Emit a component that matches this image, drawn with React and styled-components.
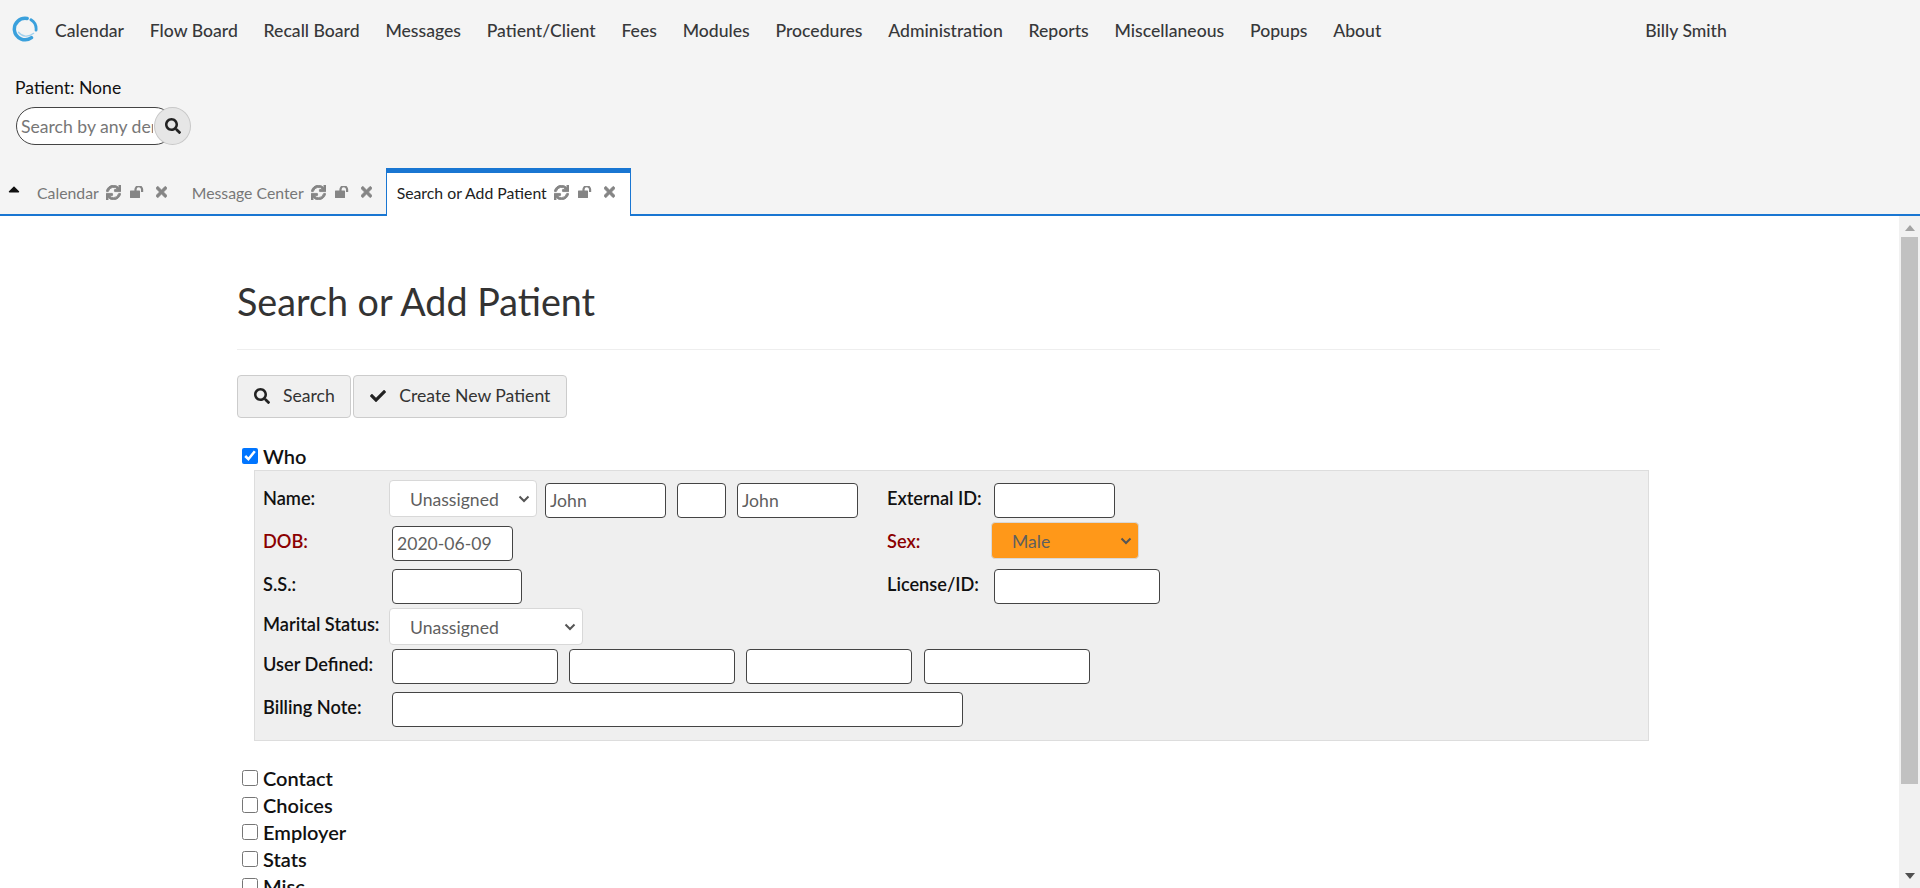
import React from 'react';
import styled, { createGlobalStyle } from 'styled-components';
import { FaSearch, FaCheck, FaSync, FaTimes, FaCaretUp } from 'react-icons/fa';

const GlobalStyle = createGlobalStyle`
  html, body {
    margin: 0;
    height: 100%;
    overflow: hidden;
  }
  body {
    font-family: Lato, "Open Sans", sans-serif;
    color: #333;
  }
  * {
    box-sizing: border-box;
  }
`;

const chevron = `url("data:image/svg+xml,%3Csvg xmlns='http://www.w3.org/2000/svg' width='12' height='8' viewBox='0 0 12 8'%3E%3Cpath d='M1.5 1.5L6 6l4.5-4.5' fill='none' stroke='%23555' stroke-width='2'/%3E%3C/svg%3E")`;

const Page = styled.div`
  height: 100vh;
  display: flex;
  flex-direction: column;
  background: #fff;
`;

const Header = styled.header`
  background: #f4f4f4;
  flex: none;
  height: 216px;
  display: flex;
  flex-direction: column;
  border-bottom: 2px solid #1976d2;
`;

const Nav = styled.nav`
  display: flex;
  align-items: center;
  height: 52px;
  padding: 9px 0 0 12px;
`;

const Logo = styled.svg`
  width: 26px;
  height: 26px;
  margin: -4px 17px 0 0;
  flex: none;
`;

const NavLinks = styled.div`
  display: flex;
  gap: 25.8px;
`;

const NavLink = styled.a`
  font-size: 17.6px;
  font-weight: 500;
  color: #37383a;
`;

const NavUser = styled(NavLink)`
  margin-left: 264px;
`;

const PatientBlock = styled.div`
  padding: 26px 0 0 15px;
`;

const PatientLabel = styled.div`
  font-size: 17.6px;
  line-height: 20px;
  color: #111;
`;

const SearchBox = styled.div`
  display: flex;
  align-items: center;
  width: 176px;
  height: 38px;
  margin: 9px 0 0 1px;
`;

const SearchInput = styled.input`
  width: 158px;
  height: 38px;
  margin-right: -20px;
  padding: 0 20px 0 4px;
  font: 17.6px Lato, sans-serif;
  border: 1px solid #444;
  border-radius: 19px;
  background: #fff;
  &::placeholder {
    color: #777;
  }
`;

const SearchButton = styled.button`
  position: relative;
  width: 37px;
  height: 38px;
  padding: 0;
  border: 1px solid #c8c8c8;
  border-radius: 50%;
  background: #e6e6e6;
  color: #222;
  font-size: 16px;
  display: flex;
  align-items: center;
  justify-content: center;
`;

const TabBar = styled.div`
  display: flex;
  align-items: flex-end;
  height: 46px;
  margin-top: 23px;
`;

const TabToggle = styled.span`
  width: 37px;
  height: 100%;
  padding: 12px 0 0 5px;
  color: #111;
  font-size: 18px;
`;

const Tab = styled.div`
  display: flex;
  align-items: center;
  height: 44px;
  padding: 0 25px 0 0;
  font-size: 15.8px;
  color: #777;
`;

const ActiveTab = styled(Tab)`
  height: 48px;
  margin: 0 0 -2px -11px;
  padding: 0 15px 5px 10px;
  color: #222;
  background: #fff;
  border: 1px solid #1976d2;
  border-top: 5px solid #1976d2;
  border-bottom: none;
`;

const TabIcons = styled.span`
  display: flex;
  align-items: center;
  gap: 9px;
  margin-left: 7px;
  color: #858585;
  font-size: 15px;
`;

const SyncIcon = styled(FaSync)`
  stroke: currentColor;
  stroke-width: 30;
`;

const CloseIcon = styled(FaTimes)`
  width: 11px;
  height: 16px;
  margin-left: 2px;
  stroke: currentColor;
  stroke-width: 20;
`;

const Body = styled.div`
  flex: 1;
  min-height: 0;
  display: flex;
`;

const Content = styled.main`
  flex: 1;
  min-width: 0;
  overflow: hidden;
`;

const Scrollbar = styled.div`
  flex: none;
  width: 21px;
  display: flex;
  flex-direction: column;
  align-items: center;
  background: #f1f1f1;
`;

const ScrollArrow = styled.span`
  flex: none;
  width: 0;
  height: 0;
  margin: ${(p) => (p.$down ? 'auto 0 9px' : '9px 0 0')};
  border-left: 5px solid transparent;
  border-right: 5px solid transparent;
  border-${(p) => (p.$down ? 'top' : 'bottom')}: 6px solid ${(p) => (p.$down ? '#505050' : '#a3a3a3')};
`;

const ScrollThumb = styled.span`
  flex: none;
  width: 17px;
  height: 547px;
  margin-top: 6px;
  background: #c1c1c1;
`;

const Container = styled.div`
  width: 1423px;
  margin-left: 237px;
`;

const Title = styled.h1`
  margin: 0;
  padding: 63px 0 24px;
  font-size: 37.7px;
  line-height: 46px;
  font-weight: 400;
  color: #333;
  border-bottom: 1px solid #eee;
`;

const Toolbar = styled.div`
  display: flex;
  gap: 2px;
  margin-top: 25px;
`;

const ToolButton = styled.button`
  display: flex;
  align-items: center;
  gap: 13px;
  height: 43px;
  padding: 0 15.5px 2px 16px;
  font: 17.6px Lato, sans-serif;
  color: #333;
  background: #f0f0f0;
  border: 1px solid #ccc;
  border-radius: 4px;
  svg {
    font-size: 16px;
    color: #222;
  }
`;

const SectionToggle = styled.label`
  display: flex;
  align-items: center;
  gap: 5px;
  height: 27px;
  padding-left: 5px;
  font-size: 20px;
  font-weight: 600;
  color: #111;
`;

const WhoToggle = styled(SectionToggle)`
  margin-top: 24px;
`;

const Check = styled.input.attrs({ type: 'checkbox' })`
  width: 16px;
  height: 16px;
  margin: 0;
`;

const Panel = styled.div`
  display: grid;
  grid-template-columns: 126px 498px 104px 1fr;
  grid-template-rows: 43px 43px 43px 37px 43px 43px;
  align-items: center;
  width: 1395px;
  height: 271px;
  margin: 1px 0 23px 17px;
  padding: 8px 8px 0;
  background: #efefef;
  border: 1px solid #ddd;
`;

const FieldLabel = styled.span`
  padding-bottom: 6px;
  font-size: 18.2px;
  font-weight: 600;
  color: ${(p) => (p.$required ? '#8b0000' : '#111')};
`;

const FieldGroup = styled.div`
  display: flex;
  align-items: center;
  gap: 11.2px;
  padding-left: 3px;
  grid-column: ${(p) => p.$span || 'auto'};
`;

const SelectGroup = styled(FieldGroup)`
  padding-left: 0;
  gap: 11px;
`;

const TextInput = styled.input`
  width: ${(p) => p.$w}px;
  height: 35px;
  padding: 0 4px;
  font: 17.6px Lato, sans-serif;
  color: #5f5f5f;
  background: #fff;
  border: 1px solid #444;
  border-radius: 4px;
`;

const Select = styled.select`
  appearance: none;
  width: ${(p) => p.$w}px;
  height: 37px;
  padding: 2px 0 0 20px;
  font: 17.6px Lato, sans-serif;
  color: #5f5f5f;
  background: ${chevron} no-repeat right 6px center #fff;
  border: 1px solid #d8d8d8;
  border-radius: 4px;
`;

const NameSelect = styled(Select)`
  margin: 0 -3px 4px 0;
`;

const SexSelect = styled(Select)`
  margin-bottom: 6px;
  background-color: #ff9819;
`;

const sections = ['Contact', 'Choices', 'Employer', 'Stats', 'Misc'];
const navItems = [
  'Calendar', 'Flow Board', 'Recall Board', 'Messages', 'Patient/Client', 'Fees', 'Modules',
  'Procedures', 'Administration', 'Reports', 'Miscellaneous', 'Popups', 'About',
];

const UnlockIcon = () => (
  <svg width="15" height="12" viewBox="0 0 15 12" fill="currentColor">
    <rect x="0" y="4.5" width="10" height="7.5" rx="0.6" />
    <path d="M5.5 5V3.5a3.2 3.2 0 0 1 6.6 0V6" fill="none" stroke="currentColor" strokeWidth="2.2" />
  </svg>
);

const TabActions = () => (
  <TabIcons>
    <SyncIcon />
    <UnlockIcon />
    <CloseIcon />
  </TabIcons>
);

const App = () => (
  <Page>
    <GlobalStyle />
    <Header>
      <Nav>
        <Logo viewBox="0 0 24 24" fill="none" strokeLinecap="round">
          <path d="M14 2.3 A10 10 0 0 0 2.2 13 A10 10 0 0 0 18 20" stroke="#3aa0dc" strokeWidth="3.2" />
          <path d="M17.5 3.5 A10 10 0 0 1 22.2 13" stroke="#3aa0dc" strokeWidth="2.6" />
          <path d="M6 15 C 9 19, 15 20, 20 16" stroke="#9fd0ee" strokeWidth="1.2" />
        </Logo>
        <NavLinks>
          {navItems.map((item) => (
            <NavLink key={item}>{item}</NavLink>
          ))}
        </NavLinks>
        <NavUser>Billy Smith</NavUser>
      </Nav>
      <PatientBlock>
        <PatientLabel>Patient: None</PatientLabel>
        <SearchBox>
          <SearchInput placeholder="Search by any demographics" />
          <SearchButton><FaSearch /></SearchButton>
        </SearchBox>
      </PatientBlock>
      <TabBar>
        <TabToggle><FaCaretUp /></TabToggle>
        <Tab>Calendar<TabActions /></Tab>
        <Tab>Message Center<TabActions /></Tab>
        <ActiveTab>Search or Add Patient<TabActions /></ActiveTab>
      </TabBar>
    </Header>
    <Body>
      <Content>
        <Container>
          <Title>Search or Add Patient</Title>
          <Toolbar>
            <ToolButton><FaSearch /> Search</ToolButton>
            <ToolButton><FaCheck /> Create New Patient</ToolButton>
          </Toolbar>
          <WhoToggle><Check defaultChecked /> Who</WhoToggle>
          <Panel>
            <FieldLabel>Name:</FieldLabel>
            <SelectGroup>
              <NameSelect $w={148}><option>Unassigned</option></NameSelect>
              <TextInput $w={121} defaultValue="John" />
              <TextInput $w={49} />
              <TextInput $w={121} defaultValue="John" />
            </SelectGroup>
            <FieldLabel>External ID:</FieldLabel>
            <FieldGroup><TextInput $w={121} /></FieldGroup>

            <FieldLabel $required>DOB:</FieldLabel>
            <FieldGroup><TextInput $w={121} defaultValue="2020-06-09" /></FieldGroup>
            <FieldLabel $required>Sex:</FieldLabel>
            <SelectGroup><SexSelect $w={148}><option>Male</option></SexSelect></SelectGroup>

            <FieldLabel>S.S.:</FieldLabel>
            <FieldGroup><TextInput $w={130} /></FieldGroup>
            <FieldLabel>License/ID:</FieldLabel>
            <FieldGroup><TextInput $w={166} /></FieldGroup>

            <FieldLabel>Marital Status:</FieldLabel>
            <SelectGroup $span="span 3"><Select $w={194}><option>Unassigned</option></Select></SelectGroup>

            <FieldLabel>User Defined:</FieldLabel>
            <FieldGroup $span="span 3">
              <TextInput $w={166} />
              <TextInput $w={166} />
              <TextInput $w={166} />
              <TextInput $w={166} />
            </FieldGroup>

            <FieldLabel>Billing Note:</FieldLabel>
            <FieldGroup $span="span 3"><TextInput $w={571} /></FieldGroup>
          </Panel>
          {sections.map((name) => (
            <SectionToggle key={name}><Check /> {name}</SectionToggle>
          ))}
        </Container>
      </Content>
      <Scrollbar>
        <ScrollArrow />
        <ScrollThumb />
        <ScrollArrow $down />
      </Scrollbar>
    </Body>
  </Page>
);

export default App;
